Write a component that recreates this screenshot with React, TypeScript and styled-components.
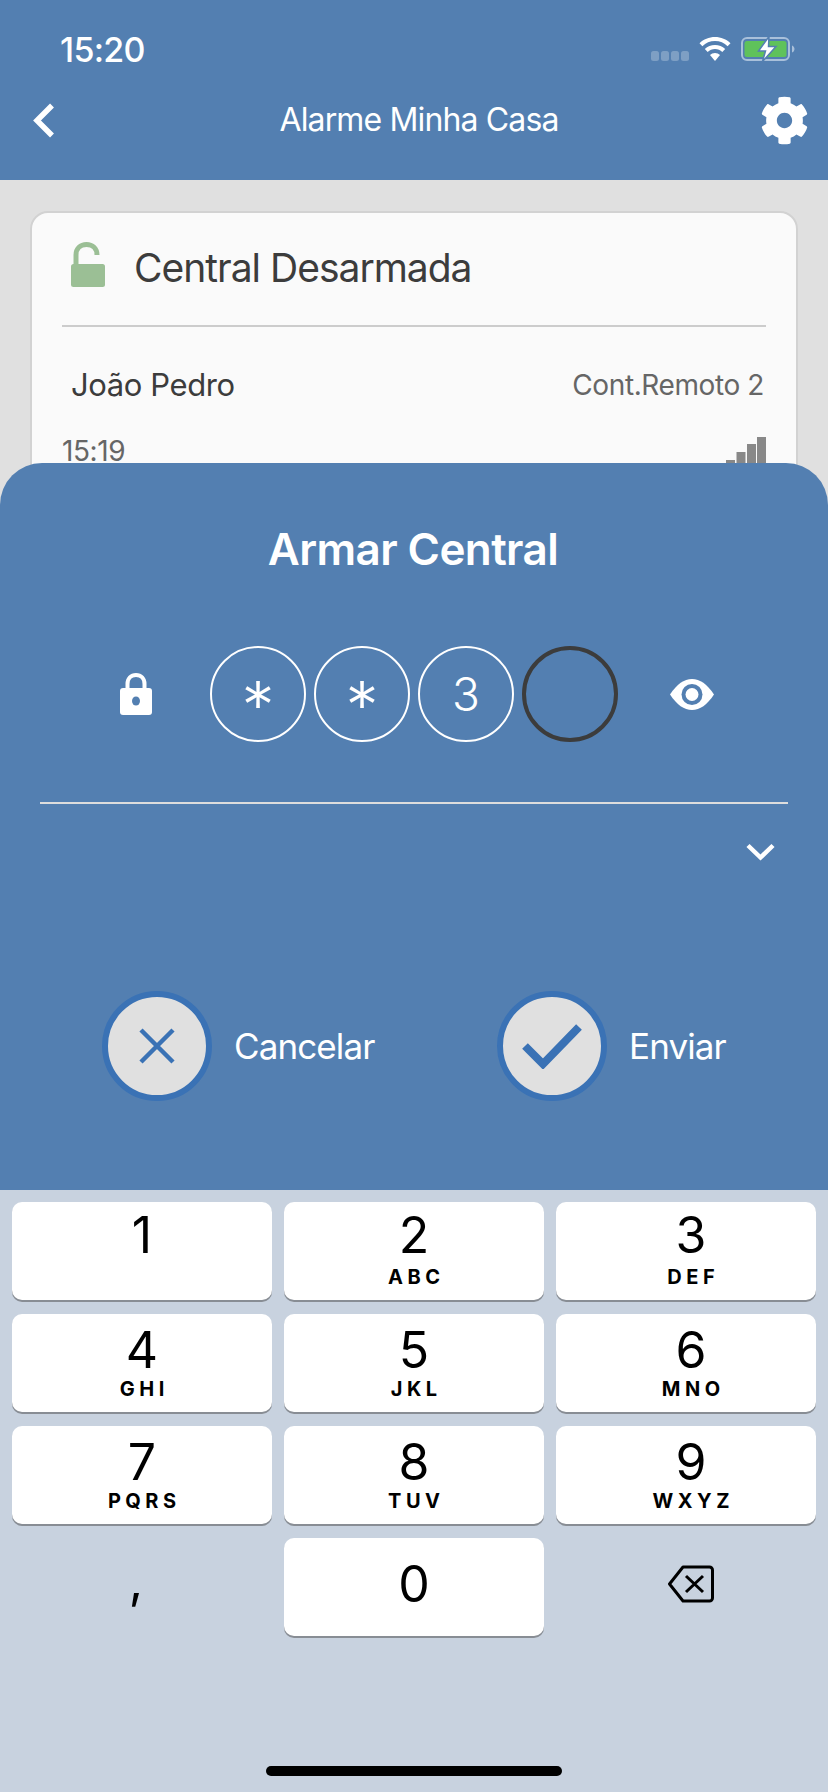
import { createGlobalStyle } from 'styled-components'
import styled from 'styled-components'
import { FaCog } from 'react-icons/fa'

const colors = {
  primary: '#537fb1',
  accent: '#3a72b5',
  page: '#e0e0e0',
  keyboard: '#c8d2df',
  text: '#3c3c3c',
  muted: '#666666',
}

const GlobalStyle = createGlobalStyle`
  html, body {
    margin: 0;
    padding: 0;
    background: ${colors.page};
  }
  * {
    box-sizing: border-box;
  }
  body {
    font-family: Inter, "Liberation Sans", sans-serif;
  }
`

const Screen = styled.div`
  position: relative;
  width: 828px;
  height: 1792px;
  overflow: hidden;
  background-color: ${colors.page};
`

const Header = styled.header`
  height: 180px;
  background-color: ${colors.primary};
  color: #fff;
`

const StatusBar = styled.div`
  height: 88px;
  padding: 10px 33px 0 60px;
  display: flex;
  align-items: center;
  justify-content: space-between;
`

const Time = styled.span`
  font-size: 34px;
  font-weight: 500;
  letter-spacing: -0.7px;
`

const StatusIcons = styled.div`
  display: flex;
  align-items: center;
  gap: 10px;
`

const NavBar = styled.div`
  height: 64px;
  padding: 0 19px 0 33px;
  display: grid;
  grid-template-columns: 1fr auto 1fr;
  align-items: center;
`

const NavTitle = styled.h1`
  margin: 0 4px 2px 0;
  font-size: 32px;
  font-weight: 400;
  letter-spacing: -0.86px;
`

const NavRight = styled.div`
  display: flex;
  justify-content: flex-end;
`

const Content = styled.main`
  padding: 31px 30px;
`

const Card = styled.section`
  height: 500px;
  background-color: #fafafa;
  border: 2px solid #d2d2d2;
  border-radius: 18px;
`

const CardHeader = styled.div`
  height: 112px;
  padding: 0 39px 4px;
  display: flex;
  align-items: center;
  gap: 29px;
`

const StatusLock = styled.span`
  display: flex;
  margin-bottom: 5px;
`

const CardTitle = styled.h2`
  margin: 0;
  font-size: 39px;
  font-weight: 400;
  letter-spacing: -1px;
  color: ${colors.text};
`

const CardDivider = styled.div`
  height: 2px;
  margin: 0 30px;
  background-color: #cccccc;
`

const InfoRow = styled.div`
  margin-top: 40px;
  padding: 0 32px 0 39px;
  display: flex;
  align-items: center;
  justify-content: space-between;
`

const TimeRow = styled.div`
  margin-top: 34px;
  padding: 0 30px;
  display: flex;
  align-items: flex-start;
  justify-content: space-between;
`

const UserName = styled.span`
  font-size: 31px;
  line-height: 36px;
  letter-spacing: -0.4px;
  color: ${colors.text};
`

const MutedText = styled.span`
  font-size: 28px;
  line-height: 28px;
  letter-spacing: -0.4px;
  color: ${colors.muted};
`

const Overlay = styled.div`
  position: absolute;
  left: 0;
  right: 0;
  bottom: 0;
  display: flex;
  flex-direction: column;
`

const Sheet = styled.section`
  height: 727px;
  padding-top: 61px;
  border-radius: 42px 42px 0 0;
  background-color: ${colors.primary};
  color: #fff;
`

const SheetTitle = styled.h2`
  margin: 0;
  padding-right: 2px;
  text-align: center;
  font-size: 44px;
  line-height: 50px;
  font-weight: 600;
  letter-spacing: -0.6px;
`

const PinRow = styled.div`
  margin-top: 72px;
  padding-left: 120px;
  display: flex;
  align-items: center;
`

const PinCells = styled.div`
  margin: 0 52px 0 58px;
  display: flex;
  gap: 8px;
`

const PinCell = styled.div<{ $active?: boolean; $masked?: boolean }>`
  width: 96px;
  height: 96px;
  padding-top: ${(props) => (props.$masked ? '22px' : '0')};
  border-radius: 50%;
  border: ${(props) => (props.$active ? `4px solid ${colors.text}` : '2px solid #fff')};
  display: flex;
  align-items: center;
  justify-content: center;
  font-size: ${(props) => (props.$masked ? '66px' : '46px')};
  font-weight: 300;
`

const SheetDivider = styled.div`
  height: 2px;
  margin: 60px 40px 0;
  background-color: #dddddd;
`

const ChevronRow = styled.div`
  margin-top: 39px;
  padding-right: 53px;
  display: flex;
  justify-content: flex-end;
`

const Actions = styled.div`
  margin-top: 130px;
  padding-left: 102px;
  display: flex;
`

const Action = styled.div<{ $width: number }>`
  width: ${(props) => props.$width}px;
  display: flex;
  align-items: center;
  gap: 22px;
`

const ActionCircle = styled.div`
  width: 110px;
  height: 110px;
  border-radius: 50%;
  border: 6px solid ${colors.accent};
  background-color: ${colors.page};
  display: flex;
  align-items: center;
  justify-content: center;
`

const ActionLabel = styled.span`
  font-size: 35px;
  letter-spacing: -0.9px;
`

const Keyboard = styled.section`
  height: 602px;
  padding: 12px 12px 16px;
  display: flex;
  flex-direction: column;
  background-color: ${colors.keyboard};
`

const KeyGrid = styled.div`
  display: grid;
  grid-template-columns: repeat(3, 260px);
  grid-auto-rows: 98px;
  gap: 14px 12px;

  /* the right column sits a little off centre on the iOS pad */
  & > :nth-child(3n) {
    padding-left: 10px;
  }
`

const Key = styled.div`
  padding-top: 11px;
  border-radius: 10px;
  background-color: #fff;
  box-shadow: 0 2px 0 #888d94;
  display: flex;
  flex-direction: column;
  align-items: center;
  color: #000;
`

const ZeroKey = styled(Key)`
  padding-top: 21px;
`

const BlankKey = styled.div`
  padding-bottom: 6px;
  display: flex;
  align-items: center;
  justify-content: center;
  color: #000;
`

const Digit = styled.span<{ $raised?: boolean }>`
  margin: ${(props) => (props.$raised ? '-3px 0 3px' : '0')};
  font-size: 50px;
  line-height: 50px;
  font-weight: 400;
`

const Letters = styled.span`
  margin-top: 3px;
  padding-left: 4.5px;
  font-size: 20px;
  line-height: 22px;
  font-weight: 700;
  letter-spacing: 4.5px;
`

const Comma = styled.span`
  margin: 0 12px 8px 0;
  font-size: 50px;
  line-height: 50px;
`

const HomeBar = styled.div`
  width: 296px;
  height: 10px;
  margin: auto auto 0;
  border-radius: 5px;
  background-color: #000;
`

const keys = [
  ['1', ''],
  ['2', 'ABC'],
  ['3', 'DEF'],
  ['4', 'GHI'],
  ['5', 'JKL'],
  ['6', 'MNO'],
  ['7', 'PQRS'],
  ['8', 'TUV'],
  ['9', 'WXYZ'],
]

const SignalDots = () => (
  <svg width='38' height='10' viewBox='0 0 38 10' style={{ marginTop: 13 }}>
    {[0, 10, 20, 30].map((x) => (
      <rect key={x} x={x} y='0' width='8' height='10' rx='2.5' fill='#ffffff' opacity='0.25' />
    ))}
  </svg>
)

const WifiIcon = () => (
  <svg width='32' height='24' viewBox='0 0 32 24' fill='#fff'>
    <path d='M16 0C10 0 4.600 2.300.5 6.200l2.900 3C6.700 6 11.100 4.100 16 4.100S25.300 6 28.600 9.200l2.900-3C27.400 2.300 22 0 16 0z' />
    <path d='M16 8c-3.900 0-7.500 1.500-10.200 4.100l2.900 3C10.600 13.200 13.200 12.100 16 12.100s5.400 1.100 7.300 3l2.900-3C23.500 9.500 19.900 8 16 8z' />
    <path d='M16 16c-1.900 0-3.700.8-5 2l5 6 5-6c-1.300-1.200-3.100-2-5-2z' />
  </svg>
)

const BatteryIcon = () => (
  <svg width='54' height='26' viewBox='0 0 54 26'>
    <rect x='1' y='2' width='47' height='22' rx='5' fill='none' stroke='#a9c0da' strokeWidth='2' />
    <rect x='3.500' y='5' width='42' height='16' rx='2.5' fill='#5fc25b' />
    <path d='M51 9.500c1.500.5 2.500 2 2.500 3.500s-1 3-2.500 3.500z' fill='#a9c0da' />
    <path d='M28 .5L17.500 15h7l-3 10.500L35 10.500h-7.500z' fill='#fff' stroke={colors.primary} strokeWidth='1.500' />
  </svg>
)

const BackIcon = () => (
  <svg width='22' height='35' viewBox='0 0 22 35'>
    <path d='M19 2.500L4 17.500l15 15' fill='none' stroke='#fff' strokeWidth='5.500' />
  </svg>
)

const OpenLockIcon = () => (
  <svg width='34' height='45' viewBox='0 0 34 45'>
    <path d='M5 24V13C5 6.500 9.500 2.500 15.500 2.500S26 6.500 26 13' fill='none' stroke='#9bbf95' strokeWidth='5' />
    <rect x='0' y='22' width='34' height='23' rx='2.500' fill='#9bbf95' />
  </svg>
)

const SignalBars = () => (
  <svg width='40' height='30' viewBox='0 0 40 30' fill='#888888'>
    <rect x='0' y='23' width='9' height='7' />
    <rect x='10.500' y='15' width='9' height='15' />
    <rect x='21' y='7' width='9' height='23' />
    <rect x='31' y='0' width='9' height='30' />
  </svg>
)

const LockIcon = () => (
  <svg width='32' height='42' viewBox='0 0 32 42'>
    <path d='M7.500 20V11C7.500 5.500 11 2 16 2s8.500 3.500 8.500 9v9' fill='none' stroke='#fff' strokeWidth='4' />
    <rect x='0' y='15' width='32' height='27' rx='3' fill='#fff' />
    <ellipse cx='16' cy='28' rx='4' ry='4.500' fill={colors.primary} />
  </svg>
)

const EyeIcon = () => (
  <svg width='44' height='31' viewBox='0 0 44 31'>
    <path d='M0 15.500C7 5 14 0 22 0s15 5 22 15.500C37 26 30 31 22 31S7 26 0 15.500z' fill='#fff' />
    <circle cx='22' cy='15.500' r='10.500' fill={colors.primary} />
    <circle cx='22' cy='15.500' r='6.500' fill='#fff' />
  </svg>
)

const ChevronDownIcon = () => (
  <svg width='29' height='18' viewBox='0 0 29 18'>
    <path d='M2 2.500l12.500 12 12.500-12' fill='none' stroke='#fff' strokeWidth='4.500' />
  </svg>
)

const CloseIcon = () => (
  <svg width='36' height='36' viewBox='0 0 36 36'>
    <path d='M2 2l32 32M34 2L2 34' fill='none' stroke={colors.accent} strokeWidth='4.500' />
  </svg>
)

const CheckIcon = () => (
  <svg width='60' height='46' viewBox='0 0 60 46'>
    <path d='M3 23l18 18L57 4' fill='none' stroke={colors.accent} strokeWidth='8' />
  </svg>
)

const BackspaceIcon = () => (
  <svg width='46' height='38' viewBox='0 0 46 38'>
    <path
      d='M15 2h26.500a3 3 0 0 1 3 3v28a3 3 0 0 1-3 3H15L1.500 19z'
      fill='none'
      stroke='#000'
      strokeWidth='3'
      strokeLinejoin='round'
    />
    <path d='M18 11l17 16M35 11L18 27' fill='none' stroke='#000' strokeWidth='3' />
  </svg>
)

const App = () => {
  return (
    <Screen>
      <GlobalStyle />
      <Header>
        <StatusBar>
          <Time>15:20</Time>
          <StatusIcons>
            <SignalDots />
            <WifiIcon />
            <BatteryIcon />
          </StatusIcons>
        </StatusBar>
        <NavBar>
          <BackIcon />
          <NavTitle>Alarme Minha Casa</NavTitle>
          <NavRight>
            <FaCog size={49} />
          </NavRight>
        </NavBar>
      </Header>
      <Content>
        <Card>
          <CardHeader>
            <StatusLock>
              <OpenLockIcon />
            </StatusLock>
            <CardTitle>Central Desarmada</CardTitle>
          </CardHeader>
          <CardDivider />
          <InfoRow>
            <UserName>João Pedro</UserName>
            <MutedText>Cont.Remoto 2</MutedText>
          </InfoRow>
          <TimeRow>
            <MutedText>15:19</MutedText>
            <SignalBars />
          </TimeRow>
        </Card>
      </Content>
      <Overlay>
        <Sheet>
          <SheetTitle>Armar Central</SheetTitle>
          <PinRow>
            <LockIcon />
            <PinCells>
              <PinCell $masked>*</PinCell>
              <PinCell $masked>*</PinCell>
              <PinCell>3</PinCell>
              <PinCell $active />
            </PinCells>
            <EyeIcon />
          </PinRow>
          <SheetDivider />
          <ChevronRow>
            <ChevronDownIcon />
          </ChevronRow>
          <Actions>
            <Action $width={395}>
              <ActionCircle>
                <CloseIcon />
              </ActionCircle>
              <ActionLabel>Cancelar</ActionLabel>
            </Action>
            <Action $width={240}>
              <ActionCircle>
                <CheckIcon />
              </ActionCircle>
              <ActionLabel>Enviar</ActionLabel>
            </Action>
          </Actions>
        </Sheet>
        <Keyboard>
          <KeyGrid>
            {keys.map(([digit, letters], index) => (
              <Key key={digit}>
                <Digit $raised={index < 3}>{digit}</Digit>
                {letters && <Letters>{letters}</Letters>}
              </Key>
            ))}
            <BlankKey>
              <Comma>,</Comma>
            </BlankKey>
            <ZeroKey>
              <Digit>0</Digit>
            </ZeroKey>
            <BlankKey>
              <BackspaceIcon />
            </BlankKey>
          </KeyGrid>
          <HomeBar />
        </Keyboard>
      </Overlay>
    </Screen>
  )
}

export default App
